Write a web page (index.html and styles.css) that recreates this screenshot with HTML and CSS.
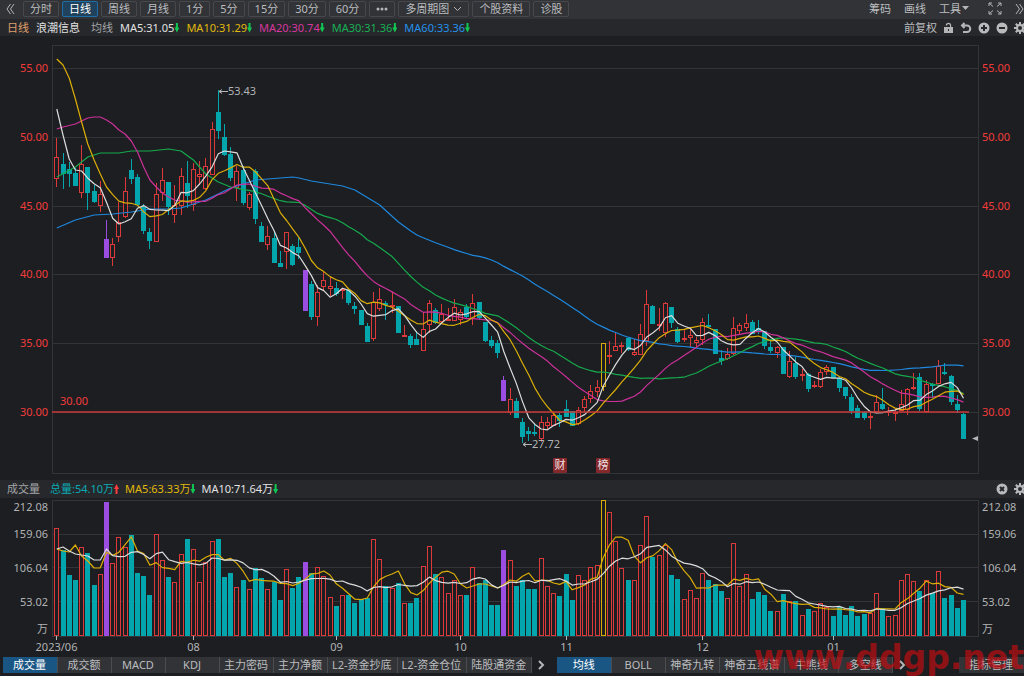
FILE: index.html
```
<!DOCTYPE html>
<html lang="zh-CN">
<head>
  <meta charset="UTF-8" />
  <meta name="viewport" content="width=device-width, initial-scale=1.0"/>
  <title>浪潮信息 日线</title>
  <link rel="stylesheet" href="styles.css">
</head>
<body>
  <header class="toolbar">
    <button class="icon-btn back" aria-label="收起"><svg width="9" height="12" viewBox="0 0 9 12"><path d="M4.5 1L1 6l3.5 5M8 1L4.5 6 8 11"/></svg></button>
    <nav class="periods">
      <button class="period">分时</button>
      <button class="period active">日线</button>
      <button class="period">周线</button>
      <button class="period">月线</button>
      <button class="period">1分</button>
      <button class="period">5分</button>
      <button class="period">15分</button>
      <button class="period">30分</button>
      <button class="period">60分</button>
      <button class="period" aria-label="更多"><svg class="solid" width="12" height="4" viewBox="0 0 12 4"><circle cx="2" cy="2" r="1.5"/><circle cx="6" cy="2" r="1.5"/><circle cx="10" cy="2" r="1.5"/></svg></button>
      <button class="period">多周期图<svg width="9" height="6" viewBox="0 0 9 6"><path d="M1 1l3.5 3.5L8 1"/></svg></button>
      <button class="period">个股资料</button>
      <button class="period">诊股</button>
    </nav>
    <div class="tools">
      <button class="tool">筹码</button>
      <button class="tool">画线</button>
      <button class="tool">工具<svg class="solid" width="7" height="5" viewBox="0 0 7 5"><path d="M0 0h7L3.5 4z"/></svg></button>
      <button class="icon-btn full" aria-label="全屏"><svg width="14" height="13" viewBox="0 0 14 13"><path d="M1 4V1h3M10 1h3v3M13 9v3h-3M4 12H1V9M1 1l4 3.500M13 1L9 4.500M13 12L9 8.500M1 12l4-3.500"/></svg></button>
      <button class="icon-btn" aria-label="展开"><svg width="9" height="12" viewBox="0 0 9 12"><path d="M1 1l3.5 5L1 11M4.5 1L8 6l-3.5 5"/></svg></button>
    </div>
  </header>

  <div class="infobar">
    <span class="orange">日线</span>
    <span class="white name">浪潮信息</span>
    <span class="gray label">均线</span>
    <span class="white">MA5:31.05<i class="arrow down"></i></span>
    <span class="yellow">MA10:31.29<i class="arrow down"></i></span>
    <span class="magenta">MA20:30.74<i class="arrow down"></i></span>
    <span class="green">MA30:31.36<i class="arrow down"></i></span>
    <span class="blue">MA60:33.36<i class="arrow down"></i></span>
    <div class="actions">
      <button class="tool">前复权</button>
      <button class="icon-btn" aria-label="锁定"><svg class="solid" width="11" height="12" viewBox="0 0 11 12"><path fill-rule="evenodd" d="M1 5h6V3.500a1.500 1.500 0 0 0-3 0H2.800a2.700 2.700 0 0 1 5.400 0V5H10v6H1zM5 7v2h1V7z"/></svg></button>
      <button class="icon-btn" aria-label="撤销"><svg class="thick" width="12" height="12" viewBox="0 0 12 12"><path d="M4.5 1L2 3.500 4.500 6M2 3.500h5a3.200 3.200 0 0 1 0 6.500H3"/></svg></button>
      <button class="icon-btn" aria-label="放大"><svg class="round" width="12" height="12" viewBox="0 0 12 12"><circle cx="6" cy="6" r="5.5"/><path d="M6 3v6M3 6h6"/></svg></button>
      <button class="icon-btn" aria-label="缩小"><svg class="round" width="12" height="12" viewBox="0 0 12 12"><circle cx="6" cy="6" r="5.5"/><path d="M3 6h6"/></svg></button>
      <button class="icon-btn" aria-label="设置"><svg class="gear" width="12" height="12" viewBox="0 0 12 12"><path d="M6 0v12M0 6h12M1.800 1.800l8.400 8.400M10.200 1.800l-8.400 8.400"/><circle cx="6" cy="6" r="3"/></svg></button>
    </div>
  </div>

  <svg class="chart" id="priceChart" viewBox="0 36 1024 444" role="img" aria-label="日K线"></svg>

  <div class="infobar volume-bar">
    <span class="gray">成交量</span>
    <span class="teal total">总量:54.10万<i class="arrow up"></i></span>
    <span class="yellow">MA5:63.33万<i class="arrow down"></i></span>
    <span class="white">MA10:71.64万<i class="arrow down"></i></span>
    <div class="actions">
      <button class="icon-btn" aria-label="关闭"><svg class="round" width="12" height="12" viewBox="0 0 12 12"><circle cx="6" cy="6" r="5.5"/><path d="M4 4l4 4M8 4L4 8"/></svg></button>
      <button class="icon-btn" aria-label="设置"><svg class="gear" width="12" height="12" viewBox="0 0 12 12"><path d="M6 0v12M0 6h12M1.800 1.800l8.400 8.400M10.200 1.800l-8.400 8.400"/><circle cx="6" cy="6" r="3"/></svg></button>
    </div>
  </div>

  <svg class="chart" id="volumeChart" viewBox="0 498 1024 159" role="img" aria-label="成交量"></svg>

  <footer class="tabs">
    <nav class="tab-group">
      <button class="tab active">成交量</button>
      <button class="tab">成交额</button>
      <button class="tab">MACD</button>
      <button class="tab">KDJ</button>
      <button class="tab">主力密码</button>
      <button class="tab">主力净额</button>
      <button class="tab">L2-资金抄底</button>
      <button class="tab">L2-资金仓位</button>
      <button class="tab">陆股通资金</button>
    </nav>
    <button class="icon-btn next" aria-label="更多指标"><svg class="thick" width="7" height="10" viewBox="0 0 7 10"><path d="M1 1l4 4-4 4"/></svg></button>
    <nav class="tab-group">
      <button class="tab active">均线</button>
      <button class="tab">BOLL</button>
      <button class="tab">神奇九转</button>
      <button class="tab">神奇五线谱</button>
      <button class="tab">牛熊线</button>
      <button class="tab">多空线</button>
    </nav>
    <button class="icon-btn next" aria-label="更多主图指标"><svg class="thick" width="7" height="10" viewBox="0 0 7 10"><path d="M1 1l4 4-4 4"/></svg></button>
    <button class="tab manage">指标管理</button>
    <span class="watermark">www.ddgp.net</span>
  </footer>

  <script src="chart.js"></script>
</body>
</html>
```

FILE: styles.css
```
* {
  box-sizing: border-box;
}

body {
  margin: 0;
  background: #1c1e21;
  color: #bcbdbf;
  font-family: "Noto Sans", "Noto Sans CJK SC", sans-serif;
  font-size: 11px;
  line-height: 16px;
  overflow: hidden;
}

button {
  margin: 0;
  padding: 0;
  border: 0;
  background: none;
  color: inherit;
  font: inherit;
  white-space: nowrap;
  cursor: pointer;
}

button svg {
  fill: none;
  stroke: #b4b5b7;
}

button svg.solid {
  fill: #b4b5b7;
  stroke: none;
}

button svg.thick {
  stroke-width: 2;
}

.round circle {
  fill: #b9babc;
  stroke: none;
}

.round path {
  stroke: #26282c;
  stroke-width: 2;
}

.gear path {
  stroke: #b9babc;
  stroke-width: 2;
}

.gear circle {
  fill: #26282c;
  stroke: #b9babc;
  stroke-width: 2;
}

.icon-btn {
  display: flex;
  align-items: center;
  flex: none;
}

/* top bar */
.toolbar {
  display: flex;
  align-items: center;
  height: 19px;
  padding-bottom: 2px;
  background: #313337;
  overflow: hidden;
}

.back {
  padding: 0 8px 0 6px;
}

.periods {
  display: flex;
  gap: 3px;
}

.period {
  display: flex;
  align-items: center;
  gap: 4px;
  height: 16px;
  padding: 0 6px;
  border: 1px solid #46484c;
  border-radius: 2px;
  line-height: 14px;
}

.period.active {
  border-color: #1d6fa8;
  background: #20425c;
  color: #fff;
}

.tools {
  display: flex;
  align-items: center;
  gap: 13px;
  margin-left: auto;
}

.tool {
  display: flex;
  align-items: center;
  gap: 1px;
}

.full {
  padding-left: 6px;
}

/* indicator values */
.infobar {
  display: flex;
  align-items: center;
  gap: 7px;
  height: 17px;
  padding-left: 7px;
  background: #26282c;
  white-space: nowrap;
  overflow: hidden;
}

.volume-bar {
  height: 18px;
  gap: 6px;
}

.label {
  padding-left: 4px;
}

.total {
  padding-left: 4px;
}

.actions {
  display: flex;
  align-items: center;
  gap: 6px;
  margin: 0 -2px 0 auto;
}

.white { color: #e2e2e2; }
.gray { color: #a4a6a8; }
.orange { color: #e0a06a; }
.yellow { color: #e2b90a; }
.magenta { color: #d8369f; }
.green { color: #18b055; }
.blue { color: #2490ea; }
.teal { color: #0aaab2; }

.arrow {
  display: inline-block;
  width: 5px;
  height: 10px;
  vertical-align: -1px;
  background: #12c653;
  clip-path: polygon(30% 0, 70% 0, 70% 50%, 100% 50%, 50% 100%, 0 50%, 30% 50%);
}

.arrow.up {
  background: #fa3c3c;
  transform: rotate(180deg);
}

/* charts */
.chart {
  display: block;
  width: 100%;
  height: auto;
}

.chart text {
  fill: #b2b3b5;
}

.chart .price-label {
  fill: #f23c3c;
}

.chart .tag-text {
  fill: #f2e2e2;
}

.frame, .grid {
  fill: none;
  stroke: #323438;
  shape-rendering: crispEdges;
}

.level {
  stroke: #c83a3a;
  stroke-width: 1.4;
}

.tick, .pointer {
  fill: none;
  stroke: #b4b5b7;
}

.marker {
  fill: #b4b5b7;
}

.tag {
  fill: #85282b;
}

.wick, .bar {
  shape-rendering: crispEdges;
}

.up { stroke: #dc3a3a; fill: #1c1e21; }
.down { stroke: #02a6ac; fill: #02a6ac; }
.limit-down { stroke: #9a4de0; fill: #9a4de0; }
.limit-up { stroke: #d8aa08; fill: #1c1e21; }

.line {
  fill: none;
  stroke-width: 1.2;
  stroke-linejoin: round;
}

.ma5 { stroke: #dcdcdc; }
.ma10 { stroke: #dcae08; }
.ma20 { stroke: #cc319a; }
.ma30 { stroke: #16aa4d; }
.ma60 { stroke: #1f88de; }

/* bottom tabs */
.tabs {
  display: flex;
  position: relative;
  height: 19px;
  padding: 0 0 3px 3px;
}

.tab-group {
  display: flex;
}

.tab {
  min-width: 54px;
  height: 16px;
  padding: 0 5px 0 4px;
  border-right: 1px solid #4a4c50;
  background: #313337;
}

.tab.active {
  min-width: 55px;
  background: #1a5684;
  color: #fff;
}

.next {
  padding: 0 12px 0 6px;
}

.manage {
  width: 65px;
  margin-left: auto;
  border: 0;
}

.watermark {
  position: absolute;
  right: 0;
  bottom: -2px;
  color: rgba(200, 12, 16, 0.68);
  font: bold 33px/40px "DejaVu Sans", sans-serif;
  pointer-events: none;
}
```

FILE: chart.js
```
// kind, high, body top, body bottom, low, volume top (chart units)
// u = up, d = down, p = limit down, y = limit up
const rows = `
u 138 157 179 187 528|d 153 164 174 189 550|d 162 169 174 187 575|d 168 173 186 186 580|u 145 164 193 198 547
d 167 167 193 210 553|d 185 191 202 203 585|u 181 194 206 212 574|p 220 239 258 258 502|u 238 244 258 266 563
u 202 222 237 242 537|u 177 191 217 218 547|d 159 170 179 184 535|d 174 177 205 206 573|d 204 207 231 234 576
d 228 232 241 249 595|u 183 194 242 242 534|u 168 180 193 201 560|d 182 182 207 215 577|u 185 205 215 223 582
u 168 176 206 215 554|d 161 183 196 208 539|u 163 169 205 211 549|u 161 174 177 185 582|u 158 166 189 190 562
u 122 129 175 175 541|d 90 112 131 139 539|d 124 137 155 156 577|d 147 154 178 181 573|u 166 171 188 201 587
d 166 170 203 205 580|u 192 194 208 210 589|d 169 171 219 224 568|d 222 226 242 242 578|u 226 236 245 250 589
d 232 238 263 263 582|d 251 263 267 267 600|u 232 232 252 269 569|d 244 246 265 266 588|d 238 247 253 259 577
p 270 270 311 311 562|d 281 284 317 320 573|u 285 292 317 326 567|u 272 280 287 291 576|u 277 286 289 296 597
d 282 288 294 296 606|u 288 289 290 299 595|d 290 290 303 305 595|d 302 306 309 314 603|d 310 310 325 325 599
d 323 326 342 342 598|u 292 302 339 341 539|u 288 299 309 311 559|d 301 303 305 320 586|u 292 305 307 313 588
d 306 306 333 333 583|u 325 335 336 337 603|d 334 336 345 348 603|d 332 339 345 345 598|u 312 329 351 351 566
u 300 303 325 333 546|d 308 310 323 324 574|u 304 314 322 323 577|u 308 319 320 321 593|u 299 307 321 321 580
u 309 312 320 325 595|d 304 307 317 318 595|u 294 303 319 325 567|d 302 302 318 320 583|d 322 322 341 342 580
d 336 340 346 348 605|d 340 343 353 358 605|p 376 380 401 401 550|u 388 399 413 415 560|d 398 401 418 418 586
d 418 422 437 443 580|d 427 431 434 441 589|d 423 432 434 436 589|u 416 422 439 442 558|u 417 422 426 429 586
u 413 415 426 426 593|d 413 415 421 427 596|d 400 409 417 417 574|d 411 411 426 426 600|u 407 410 424 425 575
u 396 399 408 412 580|u 385 391 399 403 567|u 380 387 392 397 565|y 343 343 387 391 500|u 341 355 357 364 512
u 332 346 351 351 541|u 342 345 347 353 568|d 338 338 350 351 580|u 339 352 355 356 580|u 324 334 355 355 545
u 290 304 341 346 516|d 305 306 324 324 557|u 308 324 326 331 555|u 302 303 333 337 545|d 307 307 323 328 575
d 327 329 342 343 579|u 330 338 340 342 599|u 327 335 338 347 590|u 337 340 343 347 598|u 318 322 340 345 573
d 314 325 327 327 580|d 329 329 354 354 584|d 350 358 361 365 591|u 348 354 359 360 598|u 317 328 354 355 543
u 323 325 331 334 586|u 314 323 328 331 574|d 320 322 334 334 599|d 320 328 332 334 592|d 331 331 346 349 595
d 339 347 351 353 611|u 346 347 353 358 611|d 347 347 374 374 594|u 351 361 377 378 601|d 357 363 377 379 601
u 369 374 375 381 615|d 373 374 389 392 609|u 381 385 387 388 611|u 369 372 387 388 603|u 365 367 372 375 607
d 367 367 378 378 616|d 377 378 388 392 607|d 387 387 396 399 615|d 394 397 411 414 606|d 405 408 418 418 616
d 411 412 418 420 614|u 412 416 418 429 613|u 395 402 412 412 593|d 388 404 409 410 608|u 407 411 412 416 616
u 408 412 414 421 615|u 390 404 411 411 580|u 388 389 410 415 574|u 373 387 388 390 581|d 373 377 409 411 591
u 380 384 412 413 580|d 383 384 386 398 593|u 360 366 384 384 571|d 363 372 374 375 598|d 375 376 402 405 595
d 395 404 410 413 608|d 413 414 439 439 600`;

const kinds = { u: "up", d: "down", p: "limit-down", y: "limit-up" };

const candles = rows.trim().split(/[|\n]/).map(row => {
  const [kind, ...v] = row.split(" ");
  const [high, top, bottom, low, volume] = v.map(Number);
  const rising = kind === "u" || kind === "y";
  return { kind: kinds[kind], high, top, bottom, low, volume, close: rising ? top : bottom };
});

const left = 52, right = 978, step = 6.21;
const base = 636;
const xAt = i => 56.8 + i * step;

function draw(parent, tag, attrs, text) {
  const el = document.createElementNS("http://www.w3.org/2000/svg", tag);
  for (const key in attrs) el.setAttribute(key, attrs[key]);
  if (text) el.textContent = text;
  parent.appendChild(el);
}

// moving average; head holds [index, value] points from before the window is full
function average(values, n, head) {
  const points = head.map(([i, y]) => [xAt(i), y]);
  for (let i = n - 1; i < values.length; i++) {
    const sum = values.slice(i - n + 1, i + 1).reduce((a, b) => a + b, 0);
    points.push([xAt(i), sum / n]);
  }
  return points.map(p => p[0].toFixed(1) + "," + p[1].toFixed(1)).join(" ");
}

function drawLine(svg, name, values, n, head) {
  draw(svg, "polyline", { class: "line " + name, points: average(values, n, head) });
}

function drawPrice() {
  const svg = document.getElementById("priceChart");
  draw(svg, "rect", { class: "frame", x: left + 0.5, y: 45.5, width: right - left, height: 428 });

  for (let price = 55; price >= 30; price -= 5) {
    const y = Math.round(68 + (55 - price) * 13.76);
    draw(svg, "line", { class: "grid", x1: left, x2: right, y1: y + 0.5, y2: y + 0.5 });
    draw(svg, "text", { class: "price-label", x: 48, y: y + 4, "text-anchor": "end" }, price.toFixed(2));
    draw(svg, "text", { class: "price-label", x: 982, y: y + 4 }, price.toFixed(2));
  }

  candles.forEach((c, i) => {
    const x = Math.floor(xAt(i)) + 0.5;
    draw(svg, "line", { class: "wick " + c.kind, x1: x, x2: x, y1: c.high, y2: c.low });
    draw(svg, "rect", { class: "bar " + c.kind, x: x - 2, y: c.top + 0.5, width: 4, height: Math.max(c.bottom - c.top - 1, 1) });
  });

  const closes = candles.map(c => c.close);
  drawLine(svg, "ma60", closes, 60, [[0, 228], [3, 220], [6, 215], [9, 214], [12, 212], [15, 209], [18, 209], [20, 208], [24, 200], [28, 188], [32, 180], [38, 177], [39, 178], [41, 181], [46, 186], [48, 190], [52, 205], [55, 222], [57, 231], [58, 235]]);
  drawLine(svg, "ma30", closes, 30, [[0, 177], [3, 167], [5, 157], [7, 153], [10, 153], [12, 151], [15, 151], [18, 149], [20, 151], [22, 160], [24, 174], [26, 182], [28, 187]]);
  drawLine(svg, "ma20", closes, 20, [[0, 129], [1, 127], [3, 124], [4, 121], [5, 118], [6, 117], [7, 117], [8, 120], [9, 124], [10, 130], [11, 134], [12, 141], [13, 152], [14, 167], [15, 180], [16, 187], [17, 193], [18, 197]]);
  drawLine(svg, "ma10", closes, 10, [[0, 59], [1, 65], [2, 78], [3, 99], [4, 122], [5, 144], [6, 160], [7, 174], [8, 187]]);
  drawLine(svg, "ma5", closes, 5, [[0, 109], [1, 135], [2, 159], [3, 170]]);

  draw(svg, "line", { class: "level", x1: left, x2: 969, y1: 412, y2: 412 });
  draw(svg, "text", { class: "price-label", x: 60, y: 405 }, "30.00");

  // highest and lowest price
  draw(svg, "path", { class: "pointer", d: "M219 91.5h9M222 89.5l-3 2 3 2" });
  draw(svg, "text", { x: 228, y: 95 }, "53.43");
  draw(svg, "path", { class: "pointer", d: "M523 444.5h9M526 442.5l-3 2 3 2" });
  draw(svg, "text", { x: 532, y: 448 }, "27.72");

  for (const [x, word] of [[560, "财"], [603, "榜"]]) {
    draw(svg, "rect", { class: "tag", x: x - 7, y: 458, width: 14, height: 15, rx: 1 });
    draw(svg, "text", { class: "tag-text", x: x, y: 469, "text-anchor": "middle" }, word);
  }
  draw(svg, "path", { class: "marker", d: "M972 438.5l6-2.5v5z" });
}

function drawVolume() {
  const svg = document.getElementById("volumeChart");
  draw(svg, "rect", { class: "frame", x: left + 0.5, y: 500.5, width: right - left, height: base - 500 });
  for (const y of [534, 567, 601]) {
    draw(svg, "line", { class: "grid", x1: left, x2: right, y1: y + 0.5, y2: y + 0.5 });
  }
  for (const [y, label] of [[511, "212.08"], [538, "159.06"], [572, "106.04"], [606, "53.02"], [633, "万"]]) {
    draw(svg, "text", { x: 48, y: y, "text-anchor": "end" }, label);
    draw(svg, "text", { x: 982, y: y }, label);
  }

  candles.forEach((c, i) => {
    const x = Math.floor(xAt(i)) + 0.5;
    draw(svg, "rect", { class: "bar " + c.kind, x: x - 2, y: c.volume + 0.5, width: 4, height: base - c.volume - 1 });
  });

  const volumes = candles.map(c => c.volume);
  drawLine(svg, "ma10", volumes, 5, [[0, 549], [1, 551], [2, 552], [3, 545]]);
  drawLine(svg, "ma5", volumes, 10, [[0, 549], [1, 547], [2, 551], [3, 554], [4, 555], [5, 556], [6, 560], [7, 560], [8, 549]]);

  for (const [i, label] of [[0, "2023/06"], [22, "08"], [45, "09"], [65, "10"], [82, "11"], [104, "12"], [125, "01"]]) {
    const x = Math.floor(xAt(i)) + 0.5;
    draw(svg, "line", { class: "tick", x1: x, x2: x, y1: 636, y2: 640 });
    draw(svg, "text", { x: x, y: 651, "text-anchor": "middle" }, label);
  }
}

drawPrice();
drawVolume();
```
